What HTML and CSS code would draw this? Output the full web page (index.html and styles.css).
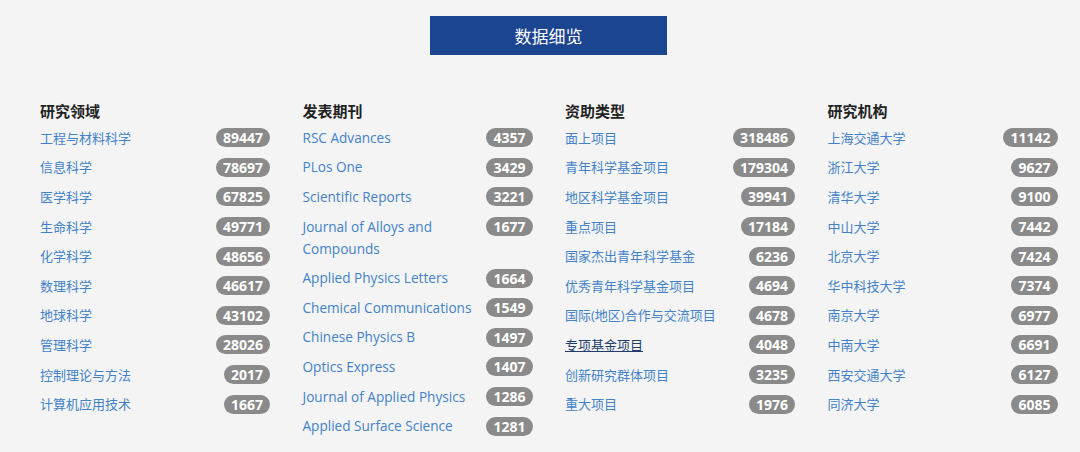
FILE: index.html
```html
<!DOCTYPE html>
<html lang="zh-CN">
<head>
<meta charset="utf-8">
<title>数据细览</title>
<link rel="stylesheet" href="styles.css">
</head>
<body>
<div class="top"><div class="title">数据细览</div></div>
<div class="grid">
  <section class="col">
    <h3 class="head">研究领域</h3>
    <ul class="list">
      <li class="row"><a class="name">工程与材料科学</a><span class="badge">89447</span></li>
      <li class="row"><a class="name">信息科学</a><span class="badge">78697</span></li>
      <li class="row"><a class="name">医学科学</a><span class="badge">67825</span></li>
      <li class="row"><a class="name">生命科学</a><span class="badge">49771</span></li>
      <li class="row"><a class="name">化学科学</a><span class="badge">48656</span></li>
      <li class="row"><a class="name">数理科学</a><span class="badge">46617</span></li>
      <li class="row"><a class="name">地球科学</a><span class="badge">43102</span></li>
      <li class="row"><a class="name">管理科学</a><span class="badge">28026</span></li>
      <li class="row"><a class="name">控制理论与方法</a><span class="badge">2017</span></li>
      <li class="row"><a class="name">计算机应用技术</a><span class="badge">1667</span></li>
    </ul>
  </section>
  <section class="col">
    <h3 class="head">发表期刊</h3>
    <ul class="list">
      <li class="row"><a class="name en">RSC Advances</a><span class="badge">4357</span></li>
      <li class="row"><a class="name en">PLos One</a><span class="badge">3429</span></li>
      <li class="row"><a class="name en">Scientific Reports</a><span class="badge">3221</span></li>
      <li class="row"><a class="name en">Journal of Alloys and Compounds</a><span class="badge">1677</span></li>
      <li class="row"><a class="name en">Applied Physics Letters</a><span class="badge">1664</span></li>
      <li class="row"><a class="name en">Chemical Communications</a><span class="badge">1549</span></li>
      <li class="row"><a class="name en">Chinese Physics B</a><span class="badge">1497</span></li>
      <li class="row"><a class="name en">Optics Express</a><span class="badge">1407</span></li>
      <li class="row"><a class="name en">Journal of Applied Physics</a><span class="badge">1286</span></li>
      <li class="row"><a class="name en">Applied Surface Science</a><span class="badge">1281</span></li>
    </ul>
  </section>
  <section class="col">
    <h3 class="head">资助类型</h3>
    <ul class="list">
      <li class="row"><a class="name">面上项目</a><span class="badge">318486</span></li>
      <li class="row"><a class="name">青年科学基金项目</a><span class="badge">179304</span></li>
      <li class="row"><a class="name">地区科学基金项目</a><span class="badge">39941</span></li>
      <li class="row"><a class="name">重点项目</a><span class="badge">17184</span></li>
      <li class="row"><a class="name">国家杰出青年科学基金</a><span class="badge">6236</span></li>
      <li class="row"><a class="name">优秀青年科学基金项目</a><span class="badge">4694</span></li>
      <li class="row"><a class="name">国际(地区)合作与交流项目</a><span class="badge">4678</span></li>
      <li class="row"><a class="name hover">专项基金项目</a><span class="badge">4048</span></li>
      <li class="row"><a class="name">创新研究群体项目</a><span class="badge">3235</span></li>
      <li class="row"><a class="name">重大项目</a><span class="badge">1976</span></li>
    </ul>
  </section>
  <section class="col">
    <h3 class="head">研究机构</h3>
    <ul class="list">
      <li class="row"><a class="name">上海交通大学</a><span class="badge">11142</span></li>
      <li class="row"><a class="name">浙江大学</a><span class="badge">9627</span></li>
      <li class="row"><a class="name">清华大学</a><span class="badge">9100</span></li>
      <li class="row"><a class="name">中山大学</a><span class="badge">7442</span></li>
      <li class="row"><a class="name">北京大学</a><span class="badge">7424</span></li>
      <li class="row"><a class="name">华中科技大学</a><span class="badge">7374</span></li>
      <li class="row"><a class="name">南京大学</a><span class="badge">6977</span></li>
      <li class="row"><a class="name">中南大学</a><span class="badge">6691</span></li>
      <li class="row"><a class="name">西安交通大学</a><span class="badge">6127</span></li>
      <li class="row"><a class="name">同济大学</a><span class="badge">6085</span></li>
    </ul>
  </section>
</div>
</body>
</html>
```
FILE: styles.css
```css
html, body {
  margin: 0;
  padding: 0;
  background: #f4f4f4;
}
body {
  font-family: "Open Sans", "Noto Sans CJK SC", sans-serif;
  color: #333;
  width: 1080px;
  height: 452px;
  overflow: hidden;
}
.top {
  display: flex;
  justify-content: center;
  padding: 16px 0 0 17px;
}
.title {
  width: 237px;
  height: 39px;
  background: #1b4590;
  color: #fff;
  font-family: "Noto Sans CJK SC", sans-serif;
  font-size: 17px;
  line-height: 39px;
  text-align: center;
}
.grid {
  display: grid;
  grid-template-columns: repeat(4, 230px);
  column-gap: 32.5px;
  padding: 45px 0 0 40px;
}
.head {
  margin: 0 0 1px;
  font-family: "Noto Sans CJK SC", sans-serif;
  font-size: 15px;
  font-weight: 700;
  line-height: 22px;
  color: #222;
}
.list {
  list-style: none;
  margin: 0;
  padding: 0;
}
.row {
  display: flex;
  justify-content: space-between;
  align-items: flex-start;
  gap: 6px;
  padding: 3.8px 0;
}
.name {
  font-size: 13px;
  line-height: 22px;
  color: #4382c8;
  text-decoration: none;
}
.name.en {
  font-size: 13.6px;
}
.name.hover {
  color: #1e3c6e;
  text-decoration: underline;
}
.badge {
  flex: none;
  margin-top: 1.5px;
  height: 19px;
  line-height: 19px;
  padding: 0 7px;
  border-radius: 9.5px;
  background: #8a8a8a;
  color: #fff;
  font-family: "Open Sans", sans-serif;
  font-size: 14px;
  font-weight: 700;
}
```
